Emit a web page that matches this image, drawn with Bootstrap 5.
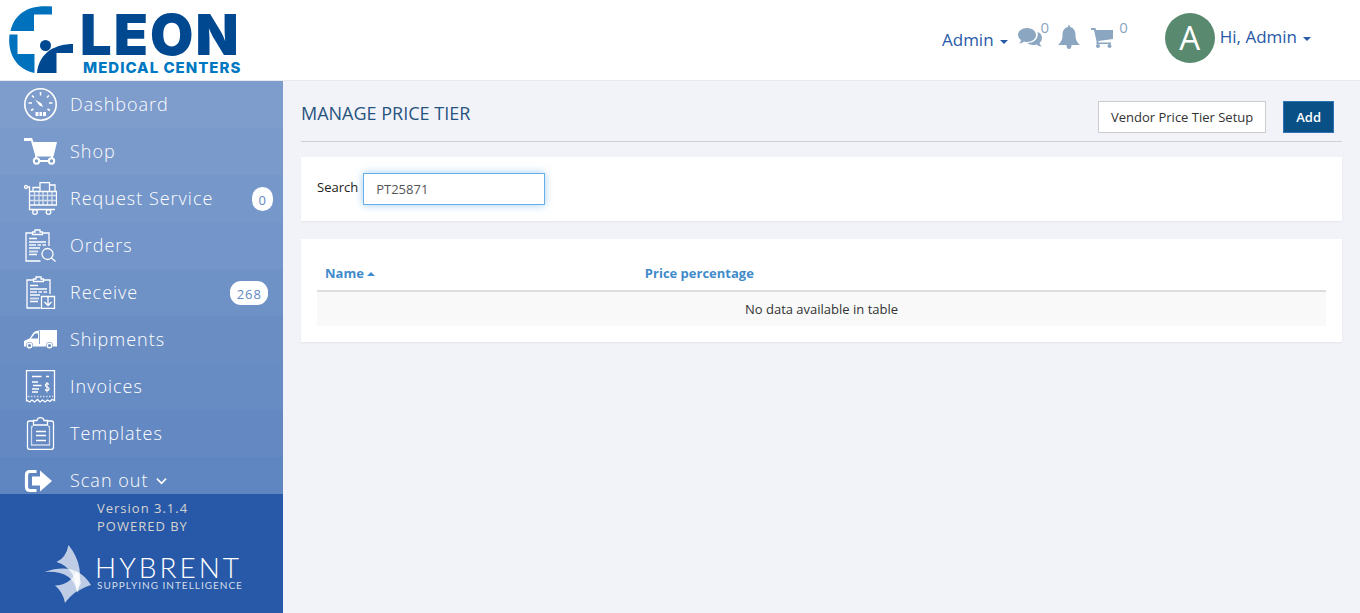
<!DOCTYPE html>
<html lang="en">
<head>
<meta charset="utf-8">
<meta name="viewport" content="width=device-width, initial-scale=1">
<title>Manage Price Tier</title>
<link href="https://cdn.jsdelivr.net/npm/bootstrap@5.3.0/dist/css/bootstrap.min.css" rel="stylesheet">
<style>
body{font-family:"Open Sans",sans-serif;font-size:13px;line-height:18px;color:#333;background:#f2f3f8}
a{text-decoration:none}
.topbar{height:81px;border-bottom:1px solid #e7e9ef;padding-right:49px}
.toplink{font-size:17px;line-height:24px;color:#2759a8}
.toplink::after{margin-left:6px;border-top-width:4px;border-left-width:4px;border-right-width:4px;vertical-align:2px}
.tools{color:#8aa6c1;padding-top:14px;margin-left:9px}
.tools a{color:inherit}
.tools svg{margin-top:10px}
.tools sup{font-size:15px;line-height:16px;top:0;padding-top:5px}
.chat-icon{margin-right:-2px}
.user{padding-top:13px;margin-left:37px}
.avatar{width:50px;height:50px;background:#59896f;color:#fff;font-size:33px;margin-right:5px}
.sidebar{width:283px}
.menu a{height:47px;padding-left:24px;padding-right:15px;color:#fff;font-size:18px;line-height:24px;font-weight:300;letter-spacing:1px}
.menu a.slim-count{padding-right:10px}
.menu-text{padding-bottom:2px}
.tone-1{background:#7e9ccc}.tone-2{background:#7a9acb}.tone-3{background:#7697ca}
.tone-4{background:#7395c9}.tone-5{background:#6e91c6}.tone-6{background:#6a8ec4}
.tone-7{background:#678bc3}.tone-8{background:#6388c2}.tone-9{background:#5f86c1}
.pic{width:33px;height:33px;flex:none;margin-right:13px;fill:none;stroke:#fff;stroke-width:1.3}
.pic .solid{fill:#fff;stroke:none}
.pic .faint{stroke-opacity:.7}
.count{background:#fff;color:#6288c3;border-radius:11px;font-size:13px;line-height:18px;padding:4px 6px 2px 7px;font-weight:400}
.powered{height:119px;background:#2759a8;color:#d5d3cf;letter-spacing:1px;padding-top:5px}
.powered p{margin:0 0 0 97px}
.page-title{font-size:18px;line-height:24px;font-weight:400;color:#27537f}
.page-main{padding:15px 18px}
.title-row{border-bottom:1px solid #cfd0d6;height:46px;padding:5px 8px 8px 0;margin-bottom:15px}
.btn{font-size:13px;line-height:18px;padding:6px 12px;border-radius:0}
.btn-plain{background:#fff;border-color:#ccc;color:#333}
.btn-add{background:#085086;border-color:#2e73b5;color:#fff;font-weight:600;margin-left:17px}
.panel{background:#fff;box-shadow:0 1px 2px rgba(0,0,0,.06);padding:16px;margin-bottom:18px}
.search-label{color:#222;font-weight:500;padding-top:5px;margin-right:5px}
.search-box,.search-box:focus{width:182px;height:32px;border:1px solid #66afe9;border-radius:0;font-size:13px;line-height:18px;padding:6px 12px;color:#555;box-shadow:0 0 8px rgba(102,175,233,.6)}
.tiers th{padding:9px 8px 8px;border-bottom:2px solid #ddd}
.tiers th:first-child{width:31.7%}
.tiers th a{color:#428bca;font-weight:700}
.tiers td{padding:8px;background:#f9f9f9;border:0;color:#333}
.sort-up{display:inline-block;border:4px solid transparent;border-top:0;border-bottom-color:#428bca;vertical-align:2px}
</style>
</head>
<body>
<div class="d-flex flex-column vh-100">
<header class="topbar bg-white d-flex justify-content-between flex-shrink-0">
  <a href="#" aria-label="Leon Medical Centers">
    <svg width="260" height="80" viewBox="0 0 260 80">
      <path fill="#0072bd" d="M52 6.500V14.500H34V31H10.500C14 15 27 4 52 6.500ZM9.500 34.500H17.500V54H34.500V73C18 70 7 55 9.500 34.500Z"/>
      <circle cx="45.500" cy="45.500" r="5.500" fill="#004990"/>
      <path fill="#004990" d="M73 44V53H56.500V73H37C38 62 43 55 50 50C57 46 64 44 73 44Z"/>
      <text x="80" y="55" font-family="Inter,sans-serif" font-weight="900" font-size="56" letter-spacing="2" fill="#004990">LEON</text>
      <text x="83" y="73" font-family="Inter,sans-serif" font-weight="800" font-size="15" letter-spacing="1" fill="#0078c1">MEDICAL CENTERS</text>
    </svg>
  </a>
  <div class="d-flex align-items-start">
    <a href="#" class="toplink dropdown-toggle mt-4 pt-1">Admin</a>
    <div class="tools d-flex align-items-start">
      <a href="#" class="d-flex" aria-label="Messages"><svg class="chat-icon" width="26" height="26" viewBox="0 0 26 26" fill="currentColor"><path d="M10 4C15 4 19 7 19 11S15 18 10 18Q8 18 7 17.500Q5 19.500 2 19.500Q4 18 4 16Q1 14 1 11C1 7 5 4 10 4Z"/><path d="M20.500 8C24 9 25 12 25 14Q25 17 22.500 19Q23 21 25 22.500Q21 22.500 19.500 20.500Q14 22 10 19C18 19 22 14 20.500 8Z"/></svg><sup>0</sup></a>
      <a href="#" class="ms-2" aria-label="Notifications"><svg width="24" height="26" viewBox="0 0 24 26" fill="currentColor"><path d="M11 3Q11 1 12 1T13 3C17 4 18.500 7 18.500 11C18.500 16 20 18 23 21H14.500Q14.500 25 12 25T9.500 21H1C4 18 5.500 16 5.500 11C5.500 7 7 4 11 3Z"/></svg></a>
      <a href="#" class="d-flex ms-2" aria-label="Cart"><svg width="26" height="26" viewBox="0 0 26 26" fill="currentColor"><path d="M2 4H6.500L7 6H24V15L9.500 17V18.500H22V20H7.500V17L5 6H2Z"/><circle cx="9" cy="22" r="2"/><circle cx="20.500" cy="22" r="2"/></svg><sup class="ps-1">0</sup></a>
    </div>
    <div class="user d-flex">
      <span class="avatar rounded-circle d-flex align-items-center justify-content-center">A</span>
      <a href="#" class="toplink dropdown-toggle mt-2 pt-1">Hi, Admin</a>
    </div>
  </div>
</header>
<div class="d-flex flex-grow-1 overflow-hidden">
  <aside class="sidebar d-flex flex-column flex-shrink-0">
    <nav class="menu flex-grow-1 overflow-hidden">
      <a href="#" class="tone-1 d-flex align-items-center"><svg class="pic" viewBox="0 0 33 33"><circle cx="16.500" cy="16.500" r="15.700" stroke-width="1.600"/><path stroke-width="1.500" d="M16.500 4V7.500M4.500 15H8M25 15H28.500M7 22.500L9.500 21M26 22.500L23.500 21M8 7.500L10 9.500M25 7.500L23 9.500"/><path class="solid" d="M11 11.500L17.500 15.500L19 19L15.500 17.500ZM11.500 24H14.500V28H11.500ZM15.500 24H18V28H15.500ZM19 24H22V28H19Z"/></svg><span class="menu-text">Dashboard</span></a>
      <a href="#" class="tone-2 d-flex align-items-center"><svg class="pic" viewBox="0 0 33 33"><path class="solid" d="M0 3H8L9.500 7H33L29.500 21.500H11.500L7 6H0Z"/><path stroke-width="2" d="M12 21V26H28V21"/><circle cx="12.500" cy="26" r="2.700" fill="#7a9acb" stroke-width="2"/><circle cx="27.500" cy="26" r="2.700" fill="#7a9acb" stroke-width="2"/></svg><span class="menu-text">Shop</span></a>
      <a href="#" class="tone-3 slim-count d-flex align-items-center"><svg class="pic" viewBox="0 0 33 33"><circle cx="2" cy="5" r="1.500"/><path d="M3.500 5H5.500V27.500H31M6 9.500H32.500V23H6M9 9V5.500H16M16 9V.7H25.500V9M25.500 3H31V9"/><path class="faint" d="M6 13.500H32M6 18.500H32M10.500 10V23M15 10V23M19 10V23M23.500 10V23M28 10V23"/><circle cx="11" cy="30" r="2.300"/><circle cx="24.500" cy="30" r="2.300"/></svg><span class="menu-text">Request Service</span><span class="count ms-auto">0</span></a>
      <a href="#" class="tone-4 d-flex align-items-center"><svg class="pic" viewBox="0 0 33 33"><path d="M9 4H2V32H16.500M18 4H25V17"/><path d="M8.500 5.500V3H11V1H16V3H18.500V5.500Z"/><path d="M5 9.500H13M5 13H22M5 19H16M5 25.500H13"/><path class="faint" stroke-width="2" d="M5 16H12M13.500 16H17M18.500 16H22M5 22.500H14"/><circle cx="23.500" cy="25" r="5.500"/><path d="M27.500 29L31.500 32.500"/></svg><span class="menu-text">Orders</span></a>
      <a href="#" class="tone-5 d-flex align-items-center"><svg class="pic" viewBox="0 0 33 33"><path d="M10 4H3V32H16.500M19 4H26V18"/><path d="M9.500 5.500V3H12V1H17V3H19.500V5.500Z"/><path d="M6 9.500H14M6 13H23M6 19H16M6 25.500H14M17.500 20.500H30.500V32.500H17.500ZM24 21V29M20.500 26L24 29.500L27.500 26"/><path class="faint" stroke-width="2" d="M6 16H13M14.500 16H18M19.500 16H23M6 22.500H15"/></svg><span class="menu-text">Receive</span><span class="count ms-auto">268</span></a>
      <a href="#" class="tone-6 d-flex align-items-center"><svg class="pic" viewBox="0 0 33 33"><path class="solid" d="M15.500 7H33V23.500H0V18L5.500 15.500L10 9Q12 7.500 15 7.500Z"/><path fill="#6a8ec4" stroke="none" d="M7 15.500L11 10.500H14V15.500Z"/><path stroke="#6a8ec4" stroke-width=".8" d="M15.500 7.500V21"/><circle cx="5.500" cy="22.500" r="3.600" fill="#6a8ec4" stroke="none"/><circle cx="25.500" cy="22.500" r="3.600" fill="#6a8ec4" stroke="none"/><circle cx="5.500" cy="22.500" r="2.300" stroke-width="1.500"/><circle cx="25.500" cy="22.500" r="2.300" stroke-width="1.500"/></svg><span class="menu-text">Shipments</span></a>
      <a href="#" class="tone-7 d-flex align-items-center"><svg class="pic" viewBox="0 0 33 33"><path d="M2.500 31.500V.7H30.500V30.500L28 29.500L26 31.500L23.500 30L21 32L18.500 30L16 32L13.500 29.500L10.500 32L8 30L5.500 32L2.500 30"/><path d="M8 6.500H17.500M22 6.500H25M8 12H14M9 15.500H17.500M8 19H15M8 22H14"/><path class="faint" stroke-dasharray="1.500 1.500" d="M4 26.500H29"/><path stroke-width="1.100" d="M25 14.500Q23 12.500 21.500 14.500Q21 16.500 23 17Q25.500 17.500 25 19.500Q23 21.500 21 19.500M23 12V22.500"/></svg><span class="menu-text">Invoices</span></a>
      <a href="#" class="tone-8 d-flex align-items-center"><svg class="pic" viewBox="0 0 33 33"><path d="M9 4H5.500Q3.500 4 3.500 6V30Q3.500 32.300 5.500 32.300H27.500Q29.500 32.300 29.500 30V6Q29.500 4 27.500 4H24M9.500 8V3.500H13Q13.500 .7 16.500 .7T20 3.500H23.500V8ZM12 14.500H22M12 18.500H22M12 23.500H22"/><path class="faint" d="M9 9.500H7.500V28H25.500V9.500H24"/></svg><span class="menu-text">Templates</span></a>
      <a href="#" class="tone-9 d-flex align-items-center"><svg class="pic" viewBox="0 0 33 33"><path stroke-width="3.200" d="M12.500 7.500H6Q2.500 7.500 2.500 11V23Q2.500 26.500 6 26.500H12.500"/><path class="solid" d="M8 12.500H16V6.500L28 17L16 27.500V21.500H8Z"/></svg><span class="menu-text">Scan out</span><svg class="ms-2" width="11" height="8" viewBox="0 0 12 8" fill="none" stroke="#fff" stroke-width="1.800"><path d="M1 1.500L6 6.500L11 1.500"/></svg></a>
    </nav>
    <footer class="powered flex-shrink-0">
      <p>Version 3.1.4</p>
      <p>POWERED BY</p>
      <svg class="d-block" width="260" height="70" viewBox="0 535 260 70">
        <g fill="#fff" fill-opacity=".7">
          <path d="M68.500 545Q86 567 77 593Q76 568 56.500 562Q66 558 68.500 545Z"/>
          <path d="M44.500 572Q76 561 91 585Q82 588 77 592Q73 570 44.500 572Z"/>
          <path d="M55 585.500Q70 585 77 571Q80 577 81 583L77 591Q69 597 65 603Q63 592 55 585.500Z"/>
        </g>
        <g fill="#fff" font-family="Lato,sans-serif" letter-spacing="0">
          <text x="95" y="578" font-size="28" font-weight="300" letter-spacing="3">HYBRENT</text>
          <text x="97" y="589" font-size="10" letter-spacing="1" fill-opacity=".8">SUPPLYING INTELLIGENCE</text>
        </g>
      </svg>
    </footer>
  </aside>
  <main class="page-main flex-grow-1 overflow-auto">
    <div class="title-row d-flex justify-content-between align-items-start">
      <h1 class="page-title m-0">MANAGE PRICE TIER</h1>
      <div class="d-flex align-items-start">
        <button type="button" class="btn btn-plain">Vendor Price Tier Setup</button>
        <button type="button" class="btn btn-add">Add</button>
      </div>
    </div>
    <section class="panel d-flex align-items-start">
      <label for="tier-search" class="search-label">Search</label>
      <input id="tier-search" type="text" class="form-control search-box" value="PT25871">
    </section>
    <section class="panel">
      <table class="table tiers m-0">
        <thead><tr><th scope="col"><a href="#">Name <span class="sort-up"></span></a></th><th scope="col"><a href="#">Price percentage</a></th></tr></thead>
        <tbody><tr><td colspan="2" class="text-center">No data available in table</td></tr></tbody>
      </table>
    </section>
  </main>
</div>
</div>
</body>
</html>
